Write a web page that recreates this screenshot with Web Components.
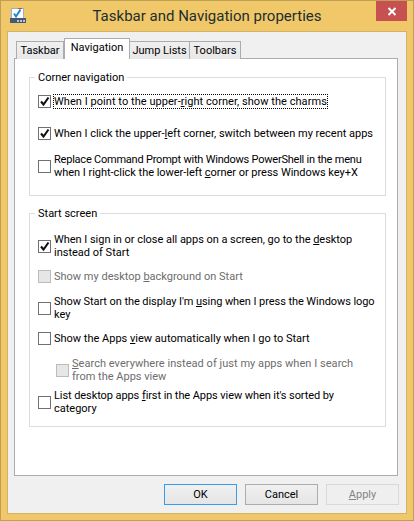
<!DOCTYPE html>
<html><head><meta charset="utf-8"><style>
html,body{margin:0;padding:0;background:#f0c869}
body{font:11px/13px Roboto,sans-serif;width:414px;height:521px;overflow:hidden}
u{text-decoration:underline}
.a{letter-spacing:.05px}.b{letter-spacing:-.22px}.c{letter-spacing:-.03px}.d{letter-spacing:-.07px}.e{letter-spacing:-.08px}.f{letter-spacing:.04px}
</style></head><body>
<template id="t-window"><style>
:host{display:flex;flex-direction:column;width:414px;height:521px;box-sizing:border-box;border:1px solid #bda056;background:#f0c869;position:relative}
.title{flex:none;height:30px;display:flex;align-items:center;justify-content:center;font-size:15px;color:#1e2e2e;position:relative;box-sizing:border-box}
.icon{position:absolute;left:9px;top:6px;width:17px;height:17px}
.close{position:absolute;right:6px;top:0;width:31px;height:20px;background:#c75050;display:flex;align-items:center;justify-content:center}
.client{margin:0 6px 6px 6px;flex:1;background:#f0f0f0;border:1px solid #d3b263;padding:6px 0 0 6px;display:flex;flex-direction:column;box-sizing:border-box}
</style>
<div class="title"><svg class="icon" viewBox="0 0 17 17"><rect x="1.5" y="1.5" width="12" height="10" fill="#fff" stroke="#9fb0c6"/><path d="M8 1h4v1H8z" fill="#d04848"/><path d="M4 6.5 6 9.5 10.5 2.5" fill="none" stroke="#1d8ad6" stroke-width="2"/><rect x="0" y="11" width="16" height="5" fill="#465a78"/><rect x="7" y="13" width="2" height="2" fill="#b6c4d6"/><rect x="10" y="13" width="2" height="2" fill="#b6c4d6"/><rect x="13" y="13" width="2" height="2" fill="#b6c4d6"/></svg>
<slot name="title"></slot>
<div class="close"><svg width="10" height="9" viewBox="0 0 10 9"><path d="M1.5 1 8.5 8M8.5 1 1.5 8" stroke="#fff" stroke-width="2"/></svg></div></div>
<div class="client"><slot></slot></div></template>

<template id="t-tabs"><style>
:host{display:flex;align-items:flex-start;flex:none;height:21px;padding-left:2px;position:relative;z-index:1;margin-bottom:-1px}
</style><slot></slot></template>

<template id="t-tab"><style>
:host{display:block;box-sizing:border-box;margin-top:3px;height:18px;width:var(--w);border:1px solid #acacac;border-left-width:0;border-bottom-width:0;background:linear-gradient(#f0f0f0,#e7e7e7);color:#000;text-align:center;line-height:17px;white-space:nowrap}
:host(:first-child){border-left-width:1px}
:host([active]){margin-top:0;height:21px;background:#fff;border-left-width:1px;line-height:18px}
</style><slot></slot></template>

<template id="t-panel"><style>
:host{display:flex;flex-direction:column;flex:none;gap:11px;box-sizing:border-box;height:418px;margin-right:8px;background:#fff;border:1px solid #acacac;padding:12px 11px 0 14px}
</style><slot></slot></template>

<template id="t-group"><style>
:host{display:block}
fieldset{margin:0;min-width:0;border:1px solid #dcdcdc;padding:0 0 0 8px;height:var(--h);box-sizing:border-box}
legend{padding:0 3px;margin-left:-3px;line-height:13px;color:#000}
</style><fieldset><legend><slot name="legend"></slot></legend><slot></slot></fieldset></template>

<template id="t-check"><style>
:host{display:flex;align-items:center;gap:3px;margin-top:var(--mt,0);color:#000;line-height:13px;white-space:nowrap}
:host([disabled]){color:#6d6d6d}
:host([indent]){margin-left:18px}
.box{flex:none;width:13px;height:13px;box-sizing:border-box;border:1px solid #707070;background:#fff;display:flex;align-items:center;justify-content:center}
:host([disabled]) .box{border-color:#bcbcbc;background:#e6e6e6}
svg{display:none}
:host([checked]) svg{display:block}
:host([focus]) .t{outline:1px dotted #000;outline-offset:0}
</style><span class="box"><svg width="11" height="11" viewBox="0 0 11 11"><path d="M2 5.5 4.5 8.5 9.5 1.5" fill="none" stroke="#111" stroke-width="2.1"/></svg></span><span class="t"><slot></slot></span></template>

<template id="t-buttons"><style>
:host{display:flex;flex:none;justify-content:flex-end;gap:8px;padding:8px 7px 0 0}
</style><slot></slot></template>

<template id="t-btn"><style>
:host{display:flex;align-items:center;justify-content:center;box-sizing:border-box;width:73px;height:21px;border:1px solid #acacac;background:linear-gradient(#f0f0f0,#e5e5e5);color:#000}
:host([primary]){border-color:#3c9be8}
:host([disabled]){border-color:#d9d9d9;background:#efefef;color:#838383}
</style><slot></slot></template>

<x-window>
<span slot="title">Taskbar and Navigation properties</span>
<x-tabs><x-tab style="--w:48px">Taskbar</x-tab><x-tab active style="--w:66px">Navigation</x-tab><x-tab style="--w:60px">Jump Lists</x-tab><x-tab style="--w:51px">Toolbars</x-tab></x-tabs>
<x-panel>
<x-group style="--h:125px"><span slot="legend">Corner navigation</span>
<x-check checked focus style="--mt:11px"><span class="a">When I point to the upper-<u>r</u>ight corner, show the charms</span></x-check>
<x-check checked style="--mt:19px">When I click the upper-<u>l</u>eft corner, switch between my recent apps</x-check>
<x-check style="--mt:13px"><span><span class="b">Replace Command Prompt with Windows PowerShell in the menu</span><br><span class="c">when I right-click the lower-left <u>c</u>orner or press Windows key+X</span></span></x-check>
</x-group>
<x-group style="--h:220px"><span slot="legend">Start screen</span>
<x-check checked style="--mt:13px"><span><span class="c">When I sign in or close all apps on a screen, go to the <u>d</u>esktop</span><br>instead of Start</span></x-check>
<x-check disabled style="--mt:11px">Show my desktop <u>b</u>ackground on Start</x-check>
<x-check style="--mt:12px"><span><span class="d">Show Start on the display I'm <u>u</u>sing when I press the Windows logo</span><br>key</span></x-check>
<x-check style="--mt:11px">Show the Apps <u>v</u>iew automatically when I go to Start</x-check>
<x-check disabled indent style="--mt:12px"><span><span class="f"><u>S</u>earch everywhere instead of just my apps when I search</span><br>from the Apps view</span></x-check>
<x-check style="--mt:6px"><span><span class="e">List desktop apps <u>f</u>irst in the Apps view when it's sorted by</span><br>category</span></x-check>
</x-group>
</x-panel>
<x-buttons><x-btn primary>OK</x-btn><x-btn>Cancel</x-btn><x-btn disabled><span><u>A</u>pply</span></x-btn></x-buttons>
</x-window>
<script>
for(const [name,id] of [['x-window','t-window'],['x-tabs','t-tabs'],['x-tab','t-tab'],['x-panel','t-panel'],['x-group','t-group'],['x-check','t-check'],['x-buttons','t-buttons'],['x-btn','t-btn']]){
customElements.define(name,class extends HTMLElement{constructor(){super();this.attachShadow({mode:'open'}).appendChild(document.getElementById(id).content.cloneNode(true))}});
}
</script>
</body></html>
